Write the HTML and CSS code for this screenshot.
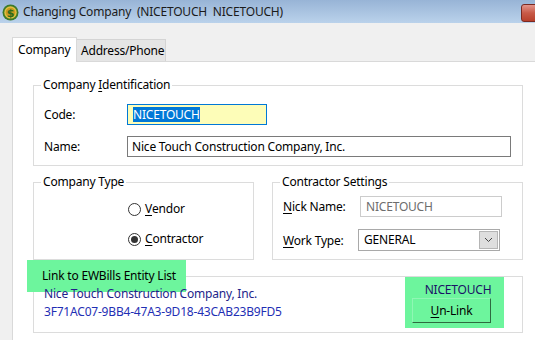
FILE: index.html
```html
<!DOCTYPE html>
<html lang="en">
<head>
  <meta charset="UTF-8" />
  <title>Changing Company</title>
  <link rel="stylesheet" href="styles.css">
</head>
<body>
  <div class="window">
    <div class="titlebar">
      <svg class="app-icon" width="17" height="17" viewBox="0 0 17 17">
        <circle cx="8.5" cy="8.5" r="8" fill="#3c7a2a"/>
        <circle cx="8.5" cy="8.5" r="6.2" fill="#e2c040"/>
        <circle cx="8.5" cy="8.5" r="4.8" fill="#c89a20"/>
        <text x="8.5" y="12.6" text-anchor="middle" font-family="DejaVu Sans" font-weight="bold" font-size="11" fill="#2f6a1c">$</text>
      </svg>
      <span class="title">Changing Company&nbsp; (NICETOUCH&nbsp; NICETOUCH)</span>
      <div class="close">
        <svg width="12" height="10" viewBox="0 0 12 10"><path d="M2 1 L10 9 M10 1 L2 9" stroke="#fff" stroke-width="2"/></svg>
      </div>
    </div>

    <div class="tabs">
      <div class="tab active">Company</div>
      <div class="tab">Address/Phone</div>
    </div>

    <div class="panel">
      <!-- Company Identification -->
      <fieldset class="group ident">
        <legend>Company <u>I</u>dentification</legend>
        <div class="gbody">
          <div class="row">
            <label>Code:</label>
            <div class="field code"><span class="sel">NICETOUCH</span></div>
          </div>
          <div class="row">
            <label>Name:</label>
            <div class="field name">Nice Touch Construction Company, Inc.</div>
          </div>
        </div>
      </fieldset>

      <div class="middle">
        <fieldset class="group ctype">
          <legend>Company Type</legend>
          <div class="gbody">
            <div class="radio"><span class="dot"></span><u>V</u>endor</div>
            <div class="radio"><span class="dot checked"></span><u>C</u>ontractor</div>
          </div>
        </fieldset>

        <fieldset class="group csettings">
          <legend>Contractor Settings</legend>
          <div class="gbody">
            <div class="row">
              <label><u>N</u>ick Name:</label>
              <div class="field nick">NICETOUCH</div>
            </div>
            <div class="row">
              <label><u>W</u>ork Type:</label>
              <div class="field select">
                <span class="value">GENERAL</span>
                <span class="drop">
                  <svg width="9" height="6" viewBox="0 0 9 6"><path d="M1 1 L4.5 4.5 L8 1" fill="none" stroke="#444" stroke-width="1"/></svg>
                </span>
              </div>
            </div>
          </div>
        </fieldset>
      </div>

      <!-- EWBills link -->
      <fieldset class="group link">
        <legend class="hl">Link to EWBills Entity List</legend>
        <div class="gbody link-body">
          <div class="link-info">
            <div class="entity">Nice Touch Construction Company, Inc.</div>
            <div class="guid">3F71AC07-9BB4-47A3-9D18-43CAB23B9FD5</div>
          </div>
          <div class="link-box">
            <div class="nick-code">NICETOUCH</div>
            <button class="unlink"><u>U</u>n-Link</button>
          </div>
        </div>
      </fieldset>
    </div>
  </div>
</body>
</html>
```

FILE: styles.css
```css
body {
  margin: 0;
  padding: 0;
  background-color: #f0f0f0;
  font-family: "Noto Sans", sans-serif;
  font-size: 12px;
  letter-spacing: -0.2px;
  color: #000;
  overflow: hidden;
}
u {
  text-decoration-thickness: 1px;
  text-underline-offset: 2px;
}
.window {
  width: 535px;
  height: 340px;
  overflow: hidden;
}
.titlebar {
  height: 23px;
  display: flex;
  align-items: center;
  background: linear-gradient(#98b4d6, #bad2eb);
  position: relative;
}
.app-icon {
  margin-left: 2px;
  margin-top: 1px;
}
.title {
  margin-left: 4px;
  color: #1b1b1b;
  white-space: pre;
}
.close {
  position: absolute;
  left: 521px;
  top: 4px;
  width: 43px;
  height: 16px;
  border: 1px solid #7a2a22;
  border-radius: 3px;
  background: linear-gradient(#e3948a, #c85a48 50%, #b8402c);
  display: flex;
  align-items: center;
  justify-content: center;
}
.tabs {
  display: flex;
  align-items: flex-end;
  margin-left: 12px;
  margin-top: 14px;
  height: 24px;
}
.tab {
  box-sizing: border-box;
  height: 22px;
  padding: 0 0 0 4px;
  width: 89px;
  background-color: #e5e5e5;
  border: 1px solid #d4d4d4;
  border-bottom: none;
  border-left: none;
  line-height: 21px;
}
.tab.active {
  width: 65px;
  height: 25px;
  padding-left: 5px;
  background-color: #fff;
  border: 1px solid #d9d9d9;
  border-bottom: none;
  margin-bottom: -1px;
  position: relative;
  z-index: 1;
  line-height: 23px;
}
.panel {
  margin-left: 12px;
  height: 300px;
  background-color: #fff;
  border-left: 1px solid #d9d9d9;
  border-top: 1px solid #d9d9d9;
  padding: 15px 0 0 20px;
}
.group {
  margin: 0;
  padding: 0;
  border: 1px solid #dcdcdc;
  min-width: 0;
  box-sizing: border-box;
}
.group legend {
  padding: 0 2px;
  margin-left: 7px;
  line-height: 16px;
}
.ident {
  width: 490px;
}
.ident .gbody {
  padding: 11px 0 8px 10px;
}
.row {
  display: flex;
  align-items: center;
}
.row label {
  width: 83px;
}
.ident .row + .row {
  margin-top: 11px;
}
.field {
  box-sizing: border-box;
  height: 21px;
  line-height: 19px;
  padding-left: 4px;
  border: 1px solid #7a7a7a;
  background-color: #fff;
  white-space: nowrap;
}
.code {
  width: 140px;
  background-color: #fdfdb8;
  border-color: #0078d7;
  padding-left: 5px;
}
.sel {
  background-color: #0078d7;
  color: #fff;
  display: inline-block;
  line-height: 15px;
}
.name {
  width: 384px;
}
.middle {
  display: flex;
  gap: 18px;
  margin-top: 8px;
  width: 490px;
}
.ctype {
  width: 221px;
}
.ctype .gbody {
  padding: 11px 0 12px 94px;
}
.radio {
  display: flex;
  align-items: center;
  line-height: 16px;
}
.radio + .radio {
  margin-top: 14px;
}
.dot {
  box-sizing: border-box;
  width: 13px;
  height: 13px;
  border: 1px solid #333;
  border-radius: 50%;
  margin-right: 4px;
  display: flex;
  align-items: center;
  justify-content: center;
}
.dot.checked::after {
  content: "";
  width: 7px;
  height: 7px;
  border-radius: 50%;
  background-color: #333;
}
.csettings {
  width: 251px;
}
.csettings .gbody {
  padding: 6px 0 8px 10px;
}
.csettings label {
  width: 77px;
}
.csettings .row + .row {
  margin-top: 12px;
}
.nick {
  width: 142px;
  border-color: #cccccc;
  color: #6d6d6d;
  padding-left: 5px;
}
.select {
  width: 142px;
  height: 22px;
  margin-left: -2px;
  border-color: #a9a9a9;
  display: flex;
  padding-left: 5px;
  line-height: 20px;
}
.select .value {
  flex: 1;
}
.drop {
  width: 19px;
  margin: 1px;
  background-color: #dedede;
  border: 1px solid #b5b5b5;
  box-sizing: border-box;
  display: flex;
  align-items: center;
  justify-content: center;
}
.link {
  width: 490px;
  margin-top: 8px;
}
.link legend.hl {
  background-color: #6df59d;
  box-shadow: 0 0 0 8px #6df59d;
  padding: 0 2px 0 7px;
  margin-left: 1px;
}
.link-body {
  display: flex;
  align-items: flex-start;
  padding: 1px 18px 4px 10px;
}
.link-info {
  line-height: 18px;
}
.entity {
  color: #231f8a;
}
.guid {
  color: #1f2fb4;
}
.link-box {
  margin-left: auto;
  margin-top: -8px;
  width: 99px;
  height: 51px;
  box-sizing: border-box;
  padding: 5px 0 0 7px;
  background-color: #6df59d;
}
.nick-code {
  width: 92px;
  text-align: center;
  line-height: 16px;
  color: #1b1266;
}
.unlink {
  width: 79px;
  height: 25px;
  font-family: "Noto Sans", sans-serif;
  font-size: 12px;
  letter-spacing: -0.2px;
  color: #000;
  background-color: #6df59d;
  border: 1px solid;
  border-color: #8ff7b4 #2e6b40 #2e6b40 #8ff7b4;
  padding: 0;
}
```
